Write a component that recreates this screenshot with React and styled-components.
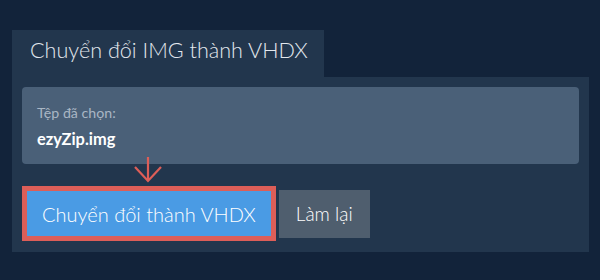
import React from 'react'
import styled, { createGlobalStyle } from 'styled-components'

const Global = createGlobalStyle`
  html, body {
    margin: 0;
    padding: 0;
    background: #12233a;
    font-family: Lato, "Noto Sans", sans-serif;
  }
`

const Page = styled.div`
  width: 600px;
  height: 280px;
  padding: 30px 0 0 12px;
  box-sizing: border-box;
`

const Widget = styled.div`
  width: 577px;
`

const Tab = styled.div`
  width: 312px;
  height: 47px;
  box-sizing: border-box;
  padding: 7px 0 0 18px;
  background: #22364d;
  color: #e3e8ee;
  font-size: 21.6px;
  line-height: 26px;
  font-weight: 300;
  white-space: nowrap;
`

const Panel = styled.div`
  background: #22364d;
  padding: 10px 10px 11px 10px;
`

const FileBox = styled.div`
  height: 77px;
  box-sizing: border-box;
  background: #4a6078;
  border-radius: 4px;
  padding: 17px 15px 0;
`

const Label = styled.div`
  color: #a9b6c4;
  font-size: 14.2px;
  line-height: 17px;
`

const FileName = styled.div`
  margin-top: 8px;
  color: #ffffff;
  font-weight: 700;
  font-size: 16.4px;
  line-height: 20px;
`

const Actions = styled.div`
  position: relative;
  display: flex;
  align-items: center;
  gap: 3px;
  margin-top: 22px;
`

const Button = styled.button`
  font-family: inherit;
  font-weight: 300;
  font-size: ${p => (p.$primary ? '20px' : '19px')};
  color: #fff;
  cursor: pointer;
  box-sizing: border-box;
  height: ${p => (p.$primary ? '55px' : '48px')};
  padding: 0 ${p => (p.$primary ? '15px' : '17px')};
  background: ${p => (p.$primary ? '#4a9be4' : '#4f5e6e')};
  border: ${p => (p.$primary ? '5px solid #dd5e58' : 'none')};
  border-radius: 0;
  white-space: nowrap;
`

const Arrow = styled.svg`
  position: absolute;
  left: 111px;
  top: -30px;
`

export default function App() {
  return (
    <Page>
      <Global />
      <Widget>
        <Tab>Chuyển đổi IMG thành VHDX</Tab>
        <Panel>
          <FileBox>
            <Label>Tệp đã chọn:</Label>
            <FileName>ezyZip.img</FileName>
          </FileBox>
          <Actions>
            <Arrow width="30" height="28" viewBox="0 0 30 28">
              <path d="M15 1 V25 M2 11 L15 25 L28 11" fill="none" stroke="#dd5e58" strokeWidth="2.2" />
            </Arrow>
            <Button $primary>Chuyển đổi thành VHDX</Button>
            <Button>Làm lại</Button>
          </Actions>
        </Panel>
      </Widget>
    </Page>
  )
}
